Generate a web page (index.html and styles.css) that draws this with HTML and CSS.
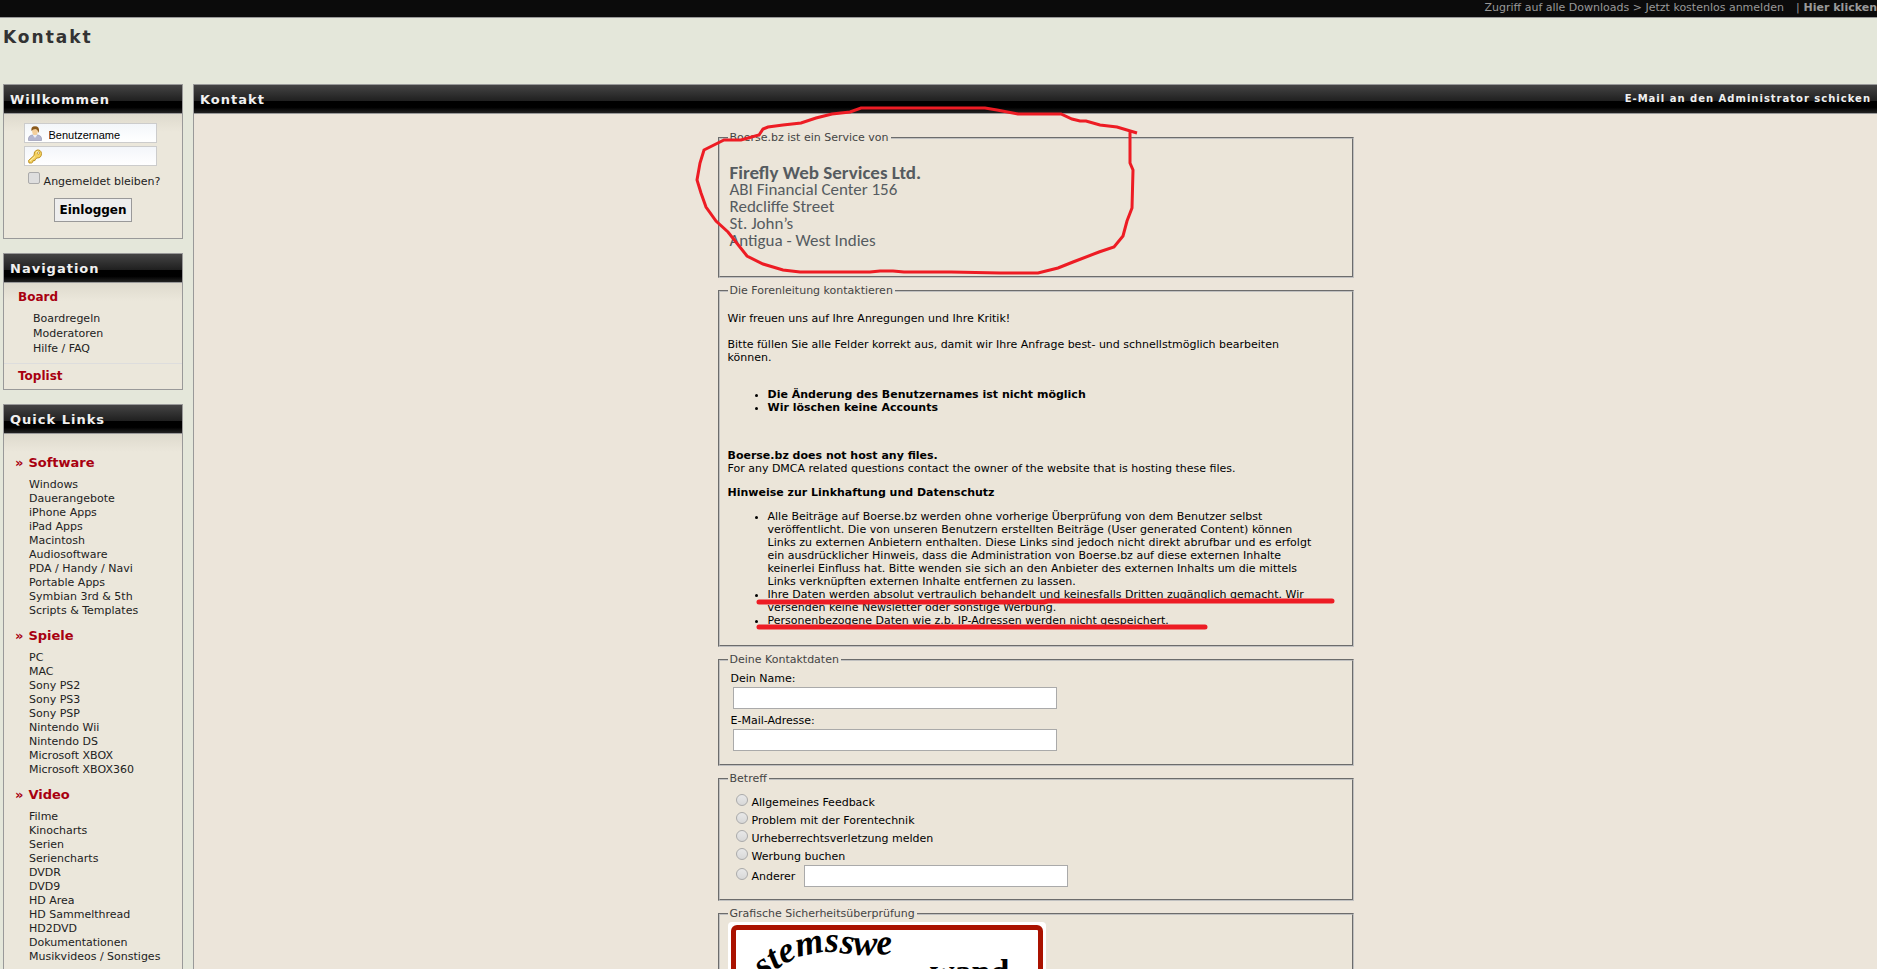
FILE: index.html
```html
<!DOCTYPE html>
<html lang="de">
<head>
<meta charset="utf-8">
<title>Kontakt</title>
<link rel="stylesheet" href="styles.css">
</head>
<body>
<div class="topbar">
  <a href="#">Zugriff auf alle Downloads &gt; Jetzt kostenlos anmelden</a>
  <span class="sep">|</span>
  <a href="#" class="strong">Hier klicken</a>
</div>
<h1 class="page-title">Kontakt</h1>
<div class="layout">
  <aside class="sidebar">
    <section class="panel">
      <h2 class="bar">Willkommen</h2>
      <form class="login">
        <div class="field">
          <svg class="icon" viewBox="0 0 14 15" aria-hidden="true">
            <path d="M.5 14.500v-2.500q.5-2.500 3.500-3h6q3 .5 3.500 3v2.500z" fill="#b4b6cf" stroke="#8f91ac" stroke-width=".6"/>
            <path d="M4.500 8.800 7 12l2.500-3.200z" fill="#eceef6"/>
            <ellipse cx="7" cy="5.200" rx="2.800" ry="3.900" fill="#f4cf9c"/>
            <path d="M3.500 5Q2.500.5 7 .3q4.500 0 4 4.700l-.8 2Q10 3.500 7.500 3 5 3 3.500 5z" fill="#8a5a1c"/>
          </svg>
          <input type="text" class="login-input" value="Benutzername" aria-label="Benutzername">
        </div>
        <div class="field">
          <svg class="icon" viewBox="0 0 14 15" aria-hidden="true">
            <path d="M1 14 .5 11.500 6 6.500Q5.500 2 9 1q4-.5 4.500 3.500 0 4.500-4.500 4.500l-1.500 1-.5 1.500-2 .2-.3 1.500-1.200.8z" fill="#f3d15f" stroke="#b98a1b" stroke-width=".9"/>
            <path d="m2 12 5-4.500M8 3.500q1-1.300 2.500-1" stroke="#fff3b5" fill="none"/>
            <circle cx="10.500" cy="4" r="1.100" fill="#fff" stroke="#a97b15" stroke-width=".6"/>
          </svg>
          <input type="password" class="login-input" aria-label="Kennwort">
        </div>
        <label class="remember"><input type="checkbox" class="check">Angemeldet bleiben?</label>
        <button type="button" class="login-button">Einloggen</button>
      </form>
    </section>
    <nav class="panel">
      <h2 class="bar">Navigation</h2>
      <div class="nav-group">
        <a href="#" class="nav-head">Board</a>
        <ul class="nav-list">
          <li><a href="#">Boardregeln</a></li>
          <li><a href="#">Moderatoren</a></li>
          <li><a href="#">Hilfe / FAQ</a></li>
        </ul>
      </div>
      <div class="nav-foot"><a href="#" class="nav-head">Toplist</a></div>
    </nav>
    <nav class="panel">
      <h2 class="bar">Quick Links</h2>
      <div class="quick">
        <h3><span class="raquo">»</span>Software</h3>
        <ul>
          <li><a href="#">Windows</a></li>
          <li><a href="#">Dauerangebote</a></li>
          <li><a href="#">iPhone Apps</a></li>
          <li><a href="#">iPad Apps</a></li>
          <li><a href="#">Macintosh</a></li>
          <li><a href="#">Audiosoftware</a></li>
          <li><a href="#">PDA / Handy / Navi</a></li>
          <li><a href="#">Portable Apps</a></li>
          <li><a href="#">Symbian 3rd &amp; 5th</a></li>
          <li><a href="#">Scripts &amp; Templates</a></li>
        </ul>
        <h3><span class="raquo">»</span>Spiele</h3>
        <ul>
          <li><a href="#">PC</a></li>
          <li><a href="#">MAC</a></li>
          <li><a href="#">Sony PS2</a></li>
          <li><a href="#">Sony PS3</a></li>
          <li><a href="#">Sony PSP</a></li>
          <li><a href="#">Nintendo Wii</a></li>
          <li><a href="#">Nintendo DS</a></li>
          <li><a href="#">Microsoft XBOX</a></li>
          <li><a href="#">Microsoft XBOX360</a></li>
        </ul>
        <h3><span class="raquo">»</span>Video</h3>
        <ul>
          <li><a href="#">Filme</a></li>
          <li><a href="#">Kinocharts</a></li>
          <li><a href="#">Serien</a></li>
          <li><a href="#">Seriencharts</a></li>
          <li><a href="#">DVDR</a></li>
          <li><a href="#">DVD9</a></li>
          <li><a href="#">HD Area</a></li>
          <li><a href="#">HD Sammelthread</a></li>
          <li><a href="#">HD2DVD</a></li>
          <li><a href="#">Dokumentationen</a></li>
          <li><a href="#">Musikvideos / Sonstiges</a></li>
        </ul>
      </div>
    </nav>
  </aside>
  <main class="content">
    <div class="bar content-bar"><h2>Kontakt</h2><span>E-Mail an den Administrator schicken</span></div>
    <form class="contact">
      <fieldset class="box">
        <legend>Boerse.bz ist ein Service von</legend>
        <address class="address">
          <strong>Firefly Web Services Ltd.</strong>
          <span>ABI Financial Center 156</span>
          <span>Redcliffe Street</span>
          <span>St. John’s</span>
          <span>Antigua - West Indies</span>
        </address>
        <svg class="mark circle" viewBox="695 105 445 172" aria-hidden="true">
          <path d="M1137 133 1117 127 1100 125 1086 121 1080 121 1072 119 1061 114H1018L997 110 985 108H861L850 112 832 114 816 118 801 123 783 125 768 127 763 129 759 135 741 140 724 140 704 150 700 163 697 180 701 193 706 207 716 221 728 232 747 256 763 264 783 270 800 272H870L880 271H893L904 272H951L1000 273H1038L1058 268 1073 262 1099 252 1114 247 1123 236 1127 221 1132 208 1133 170 1130 163V132"/>
        </svg>
      </fieldset>
      <fieldset class="box">
        <legend>Die Forenleitung kontaktieren</legend>
        <div class="prose">
          <p class="lead">Wir freuen uns auf Ihre Anregungen und Ihre Kritik!</p>
          <p>Bitte füllen Sie alle Felder korrekt aus, damit wir Ihre Anfrage best- und schnellstmöglich bearbeiten können.</p>
          <ul class="notes">
            <li>Die Änderung des Benutzernames ist nicht möglich</li>
            <li>Wir löschen keine Accounts</li>
          </ul>
          <p><strong>Boerse.bz does not host any files.</strong><br>For any DMCA related questions contact the owner of the website that is hosting these files.</p>
          <p><strong>Hinweise zur Linkhaftung und Datenschutz</strong></p>
          <ul>
            <li>Alle Beiträge auf Boerse.bz werden ohne vorherige Überprüfung von dem Benutzer selbst veröffentlicht. Die von unseren Benutzern erstellten Beiträge (User generated Content) können Links zu externen Anbietern enthalten. Diese Links sind jedoch nicht direkt abrufbar und es erfolgt ein ausdrücklicher Hinweis, dass die Administration von Boerse.bz auf diese externen Inhalte keinerlei Einfluss hat. Bitte wenden sie sich an den Anbieter des externen Inhalts um die mittels Links verknüpften externen Inhalte entfernen zu lassen.</li>
            <li>Ihre Daten werden absolut vertraulich behandelt und keinesfalls Dritten zugänglich gemacht. Wir versenden keine Newsletter oder sonstige Werbung.</li>
            <li>Personenbezogene Daten wie z.b. IP-Adressen werden nicht gespeichert.</li>
          </ul>
        </div>
        <svg class="mark lines" viewBox="755 597 582 35" aria-hidden="true">
          <path d="M759 603H1044L1048 602H1332M759 628H1205"/>
        </svg>
      </fieldset>
      <fieldset class="box">
        <legend>Deine Kontaktdaten</legend>
        <div class="details">
          <label for="name">Dein Name:</label>
          <input id="name" type="text" class="text">
          <label for="mail">E-Mail-Adresse:</label>
          <input id="mail" type="text" class="text">
        </div>
      </fieldset>
      <fieldset class="box">
        <legend>Betreff</legend>
        <div class="subjects">
          <label class="option"><input type="radio" name="subject" class="radio">Allgemeines Feedback</label>
          <label class="option"><input type="radio" name="subject" class="radio">Problem mit der Forentechnik</label>
          <label class="option"><input type="radio" name="subject" class="radio">Urheberrechtsverletzung melden</label>
          <label class="option"><input type="radio" name="subject" class="radio">Werbung buchen</label>
          <div class="option other"><label class="option"><input type="radio" name="subject" class="radio">Anderer</label><input type="text" class="text" aria-label="Anderer Betreff"></div>
        </div>
      </fieldset>
      <fieldset class="box">
        <legend>Grafische Sicherheitsüberprüfung</legend>
        <div class="captcha">
          <svg viewBox="0 0 302 116" role="img" aria-label="Captcha">
            <defs><path id="arc" d="M28 49C50 30 70 22 98 22 125 26 145 28 200 16"/></defs>
            <text class="captcha-word warped"><textPath href="#arc">stemsswe</textPath></text>
            <text class="captcha-word" x="194" y="53">wand</text>
          </svg>
        </div>
      </fieldset>
    </form>
  </main>
</div>
</body>
</html>
```
FILE: styles.css
```css
* { box-sizing: border-box; }
html { scrollbar-width: none; }
body {
  margin: 0;
  background: #e4e7da;
  color: #000;
  font: 11px/13px Verdana, "DejaVu Sans", sans-serif;
}
ul, h1, h2, h3, p { margin: 0; padding: 0; }
a { color: inherit; text-decoration: none; }

.topbar {
  display: flex;
  justify-content: flex-end;
  height: 18px;
  background: #0b0b0b;
  border-bottom: 1px solid #999;
  color: #999;
  line-height: 15px;
  white-space: nowrap;
  overflow: hidden;
}
.topbar .sep { margin: 0 4px 0 12px; }
.topbar .strong { font-weight: bold; }

.page-title {
  padding: 9px 3px 0;
  height: 66px;
  color: #333;
  font-size: 17px;
  line-height: 20px;
  letter-spacing: 2px;
}

.layout { display: flex; gap: 10px; padding-left: 3px; }
.sidebar { flex: 0 0 180px; display: flex; flex-direction: column; gap: 14px; }
.panel {
  border: 1px solid #999;
  background: #ebe7db linear-gradient(#dedacd, #ebe7db) 0 29px / 100% 18px no-repeat;
}
.bar {
  height: 29px;
  padding: 0 6px;
  background: linear-gradient(#444, #202020 56%, #000 57%, #000 80%, #222);
  border-bottom: 1px solid #999;
  color: #f0f0f0;
  font-size: 13px;
  font-weight: bold;
  line-height: 30px;
  letter-spacing: 1px;
}

.login { display: flex; flex-direction: column; align-items: center; padding: 9px 0 16px; }
.field { position: relative; margin: 0 6px 3px 0; }
.icon { position: absolute; left: 4px; top: 3px; width: 14px; height: 15px; }
.login-input {
  display: block;
  width: 133px;
  height: 20px;
  padding: 3px 0 0 24px;
  border: 1px solid #ccc;
  background: linear-gradient(#f3f6fa, #fff);
  font: 11px/13px "Liberation Sans", sans-serif;
}
.remember {
  display: flex;
  align-items: flex-start;
  gap: 4px;
  padding: 3px 0 7px 2px;
  line-height: 19px;
  color: #222;
}
.check {
  appearance: none;
  width: 12px;
  height: 12px;
  margin: 0;
  border: 1px solid #aaa;
  border-radius: 2px;
  background: #dedede;
}
.login-button {
  height: 24px;
  width: 78px;
  padding: 0;
  border: 1px solid #999;
  background: #eee;
  color: #000;
  font: bold 12px/20px Verdana, "DejaVu Sans", sans-serif;
}

.nav-head { color: #a80010; font-size: 12px; font-weight: bold; line-height: 14px; }
.nav-group { padding: 7px 14px; border-bottom: 1px solid #ddd; }
.nav-list { padding: 7px 0 0 15px; list-style: none; line-height: 15px; color: #222; }
.nav-foot { padding: 5px 14px 6px; }

.quick { padding: 20px 11px; color: #222; }
.quick h3 { display: flex; gap: 5px; color: #a80010; font-size: 13px; line-height: 18px; }
.quick ul { padding: 6px 0 9px 14px; list-style: none; line-height: 14px; white-space: nowrap; }

.content { flex: 1; min-width: 0; border: 1px solid #999; border-right: 0; background: #ece5da; }
.content-bar { display: flex; justify-content: space-between; }
.content-bar h2 { font-size: 13px; }
.content-bar span { font-size: 10px; line-height: 27px; }

.contact { max-width: 636px; margin: 0 auto; padding: 16px 0; display: grid; gap: 5px; }
.box {
  position: relative;
  min-width: 0;
  margin: 0;
  padding: 0 8px;
  border: 2px groove #c0c0c0;
  background: #ebe5d9;
}
.box legend { padding: 0 2px; color: #444; line-height: 16px; }

.address {
  display: flex;
  flex-direction: column;
  padding: 18px 2px 27px;
  color: #555b60;
  font: 17px/17px Calibri, Carlito, Lato, sans-serif;
}
.address strong { font-size: 19px; }

.mark { position: absolute; overflow: visible; pointer-events: none; fill: none; stroke: #ed1c24; }
.circle { left: -25px; top: -41px; width: 445px; height: 172px; stroke-width: 3; z-index: 1; }
.lines { left: 35px; bottom: 14px; width: 582px; height: 35px; stroke-width: 5; stroke-linecap: round; }

.prose { display: grid; gap: 11px; padding: 13px 24px 18px 0; }
.prose ul { padding-left: 40px; }
.prose .lead { padding-bottom: 2px; }
.prose .notes { padding-top: 13px; padding-bottom: 24px; font-weight: bold; }

.details { display: grid; justify-items: start; padding: 3px 3px 9px; }
.details label { line-height: 16px; }
.text { height: 22px; border: 1px solid #aaa; background: #fff; padding: 1px 4px; font: inherit; }
.details .text { width: 324px; margin: 0 2px 4px; }

.subjects { padding: 6px 8px 12px; }
.option { display: flex; align-items: center; height: 18px; gap: 4px; }
.other { height: 22px; }
.other .text { width: 264px; margin-left: 5px; }
.radio {
  appearance: none;
  width: 12px;
  height: 12px;
  margin: 0 0 4px;
  border: 1px solid #aaa;
  border-radius: 50%;
  background: linear-gradient(#e8e8e8, #d8d8d8);
}

.captcha {
  width: 318px;
  padding: 3px;
  border-radius: 4px;
  background: #fff;
}
.captcha svg { display: block; width: 312px; border: 5px solid #aa1200; border-radius: 6px; background: #fff; }
.captcha-word { font: bold 34px "Liberation Serif", serif; }
.warped { font-size: 36px; font-style: italic; }
```
